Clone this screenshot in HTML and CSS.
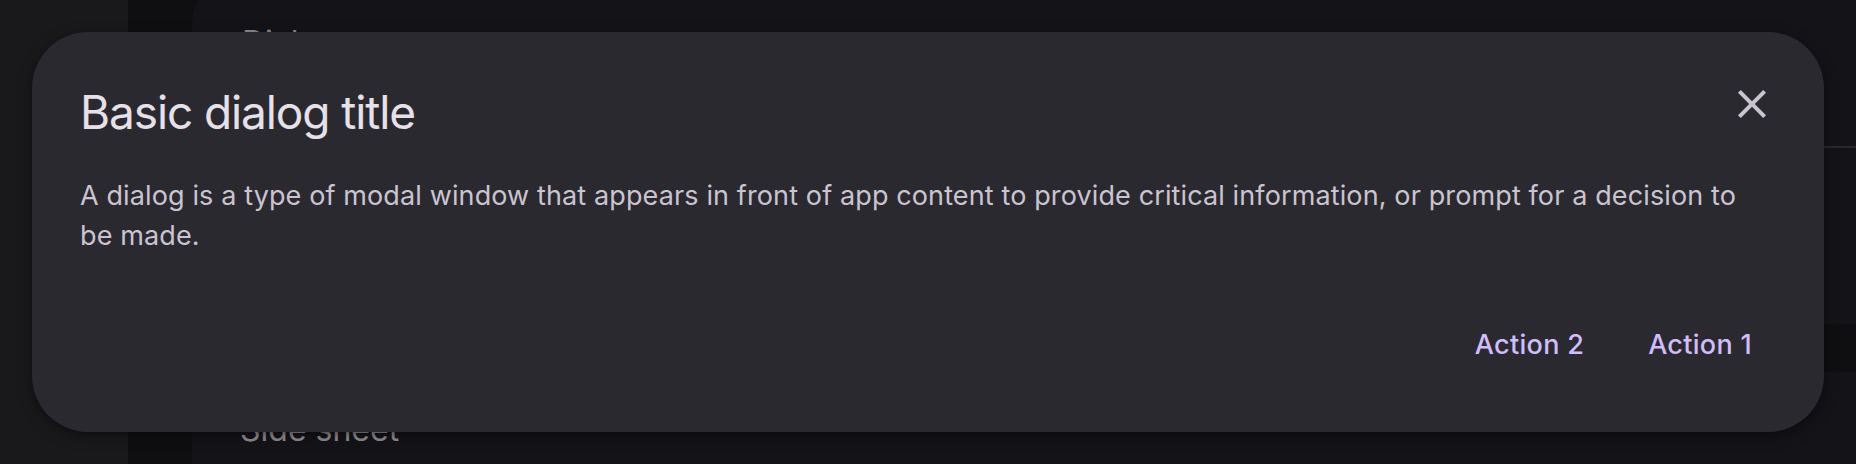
FILE: index.html
```html
<!DOCTYPE html>
<html lang="en">
<head>
<meta charset="utf-8">
<title>Dialog</title>
<link rel="stylesheet" href="styles.css">
</head>
<body>
<div class="app">
  <aside class="nav"></aside>
  <div class="rail"></div>
  <main class="main">
    <div class="card">
      <h1 class="page-title">Dialog</h1>
      <div class="divider"></div>
      <div class="band"></div>
      <h2 class="section-title">Side sheet</h2>
    </div>
  </main>
</div>

<div class="overlay">
  <div class="dialog" role="dialog" aria-labelledby="dlg-title">
    <div class="dialog-header">
      <h2 class="dialog-title" id="dlg-title">Basic dialog title</h2>
      <button class="icon-btn" aria-label="Close">
        <svg viewBox="0 0 24 24" width="48" height="48" aria-hidden="true">
          <path d="M19 6.41L17.59 5 12 10.59 6.41 5 5 6.41 10.59 12 5 17.59 6.41 19 12 13.41 17.59 19 19 17.59 13.41 12z" fill="currentColor"/>
        </svg>
      </button>
    </div>
    <p class="dialog-body">A dialog is a type of modal window that appears in front of app content to provide critical information, or prompt for a decision to be made.</p>
    <div class="dialog-actions">
      <button class="text-btn">Action 2</button>
      <button class="text-btn">Action 1</button>
    </div>
  </div>
</div>
</body>
</html>
```

FILE: styles.css
```css
* { box-sizing: border-box; }

html, body {
  margin: 0;
  padding: 0;
}

body {
  width: 1856px;
  height: 464px;
  overflow: hidden;
  position: relative;
  background: #0f0e11;
  font-family: Inter, "Noto Sans", "Liberation Sans", sans-serif;
}

.app {
  display: grid;
  grid-template-columns: 128px 64px 1fr;
  height: 464px;
}

.nav { background: #19191b; }
.rail { background: #0f0e11; }

.main {
  background: #0f0e11;
  overflow: hidden;
}

.card {
  margin-top: -24px;
  height: 520px;
  background: #141317;
  border-top-left-radius: 48px;
  padding-top: 43px;
  display: flex;
  flex-direction: column;
}

.page-title {
  margin: 0;
  padding-left: 50px;
  font-size: 32px;
  line-height: 48px;
  font-weight: 400;
  color: #8e8b93;
}

.divider {
  margin-top: 79px;
  height: 2px;
  background: #29282c;
}

.band {
  margin-top: 176px;
  height: 48px;
  background: #0f0e11;
}

.section-title {
  margin: 34px 0 0;
  padding-left: 48px;
  font-size: 32px;
  line-height: 48px;
  font-weight: 400;
  color: #8e8b93;
}

.overlay {
  position: absolute;
  inset: 0;
  padding: 32px;
  display: flex;
}

.dialog {
  flex: 1;
  background: #2b2930;
  border-radius: 56px;
  padding: 48px;
  box-shadow: 0 4px 16px rgba(0, 0, 0, 0.3), 0 2px 4px rgba(0, 0, 0, 0.2);
  display: flex;
  flex-direction: column;
}

.dialog-header {
  display: flex;
  align-items: flex-start;
  justify-content: space-between;
}

.dialog-title {
  margin: 0;
  font-size: 46px;
  line-height: 64px;
  font-weight: 400;
  letter-spacing: -1.1px;
  color: #e6e0e9;
}

.icon-btn {
  width: 48px;
  height: 48px;
  padding: 0;
  border: 0;
  background: transparent;
  color: #cac4d0;
  display: flex;
  align-items: center;
  justify-content: center;
}

.icon-btn svg { display: block; }

.dialog-body {
  margin: 32px 0 0;
  font-size: 27px;
  line-height: 40px;
  letter-spacing: 0.12px;
  color: #cac4d0;
}

.dialog-actions {
  margin-top: 48px;
  display: flex;
  justify-content: flex-end;
  gap: 16px;
}

.text-btn {
  height: 80px;
  padding: 0 24px;
  border: 0;
  background: transparent;
  font-family: Inter, "Noto Sans", "Liberation Sans", sans-serif;
  font-size: 27px;
  font-weight: 500;
  letter-spacing: 0.3px;
  color: #d0bcff;
  border-radius: 40px;
}
```
